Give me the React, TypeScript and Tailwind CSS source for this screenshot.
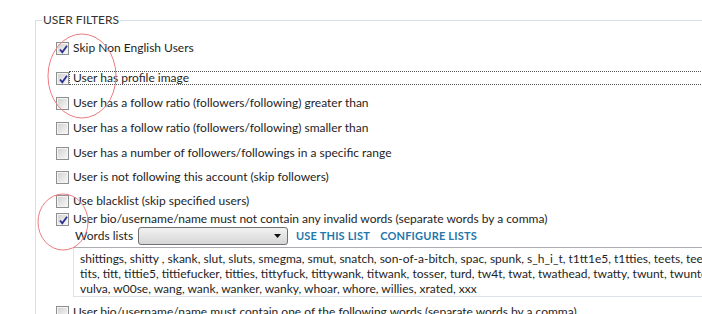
import { ReactNode } from 'react'

const font = { fontFamily: 'Lato, "Open Sans", sans-serif' }

function CheckBox({ checked }: { checked?: boolean }) {
  return (
    <span className="relative flex h-[13px] w-[13px] shrink-0 items-center justify-center border border-[#8e8f8f] bg-white">
      <span className="h-[11px] w-[11px] border border-[#f4f4f4] bg-gradient-to-br from-[#d3d3d3] to-[#f6f6f6]" />
      {checked && (
        <svg className="absolute left-[1px] top-[1px]" width="11" height="11" viewBox="0 0 11 11">
          <path d="M2 5.5 L4.3 8.3 L9 1.8" fill="none" stroke="#2a2f8f" strokeWidth="1.8" />
        </svg>
      )}
    </span>
  )
}

function Row({ checked, focused, top, children }: { checked?: boolean; focused?: boolean; top: string; children: ReactNode }) {
  return (
    <div className={`flex h-[16px] items-center ${top}`}>
      <CheckBox checked={checked} />
      <span
        className={`flex h-[14px] flex-1 items-center whitespace-nowrap border pl-[3px] ${
          focused ? 'border-dotted border-[#555]' : 'border-transparent'
        }`}
      >
        {children}
      </span>
    </div>
  )
}

export default function App() {
  return (
    <div className="relative h-[314px] w-[702px] overflow-hidden bg-white text-[12px] text-[#1e1e1e]" style={font}>
      <div className="relative ml-[35px] mt-[20px] h-[400px] w-[700px] border-l border-t border-[#d5dfe5] pl-[20px] pt-[19px]">
        <span className="absolute left-[6px] top-[-10px] bg-white px-[1px] text-[12px] leading-[18px] text-[#333]">USER FILTERS</span>

        <Row checked top="">Skip Non English Users</Row>
        <Row checked focused top="mt-[14px]">User has profile image</Row>
        <Row top="mt-[9px]">User has a follow ratio (followers/following) greater than</Row>
        <Row top="mt-[9px]">User has a follow ratio (followers/following) smaller than</Row>
        <Row top="mt-[9px]">User has a number of followers/followings in a specific range</Row>
        <Row top="mt-[8px]">User is not following this account (skip followers)</Row>
        <Row top="mt-[8px]">Use blacklist (skip specified users)</Row>
        <Row checked top="mt-[2px]">User bio/username/name must not contain any invalid words (separate words by a comma)</Row>

        <div className="ml-[19px] flex h-[18px] items-center">
          <span className="w-[63px]">Words lists</span>
          <span className="flex h-[18px] w-[150px] items-center justify-end rounded-[3px] border border-[#707070] bg-gradient-to-b from-[#f2f2f2] to-[#d6d6d6] pr-[6px]">
            <svg width="7" height="4" viewBox="0 0 7 4">
              <path d="M0 0 H7 L3.5 4 Z" fill="#111" />
            </svg>
          </span>
          <span className="ml-[8px] text-[11px] font-bold tracking-[0.2px] text-[#1f77aa]">USE THIS LIST</span>
          <span className="ml-[10px] text-[11px] font-bold tracking-[0.2px] text-[#1f77aa]">CONFIGURE LISTS</span>
        </div>

        <div className="ml-[17px] mt-[2px] h-[50px] w-[700px] overflow-hidden border border-[#dde3e8] border-t-[#abadb3] px-[6px] pt-[3px] leading-[15px] whitespace-nowrap">
          <div>shittings, shitty , skank, slut, sluts, smegma, smut, snatch, son-of-a-bitch, spac, spunk, s_h_i_t, t1tt1e5, t1tties, teets, teez, testical, testicle</div>
          <div>tits, titt, tittie5, tittiefucker, titties, tittyfuck, tittywank, titwank, tosser, turd, tw4t, twat, twathead, twatty, twunt, twunter, v14gra, v1gra, vagina</div>
          <div>vulva, w00se, wang, wank, wanker, wanky, whoar, whore, willies, xrated, xxx</div>
        </div>

        <Row top="mt-[7px]">User bio/username/name must contain one of the following words (separate words by a comma)</Row>
      </div>

      <svg className="pointer-events-none absolute left-0 top-0" width="702" height="314">
        <ellipse cx="82" cy="76" rx="34" ry="42" fill="none" stroke="#ee7b80" strokeWidth="1" />
        <ellipse cx="63" cy="222" rx="25" ry="28" fill="none" stroke="#ee7b80" strokeWidth="1" />
      </svg>
    </div>
  )
}
